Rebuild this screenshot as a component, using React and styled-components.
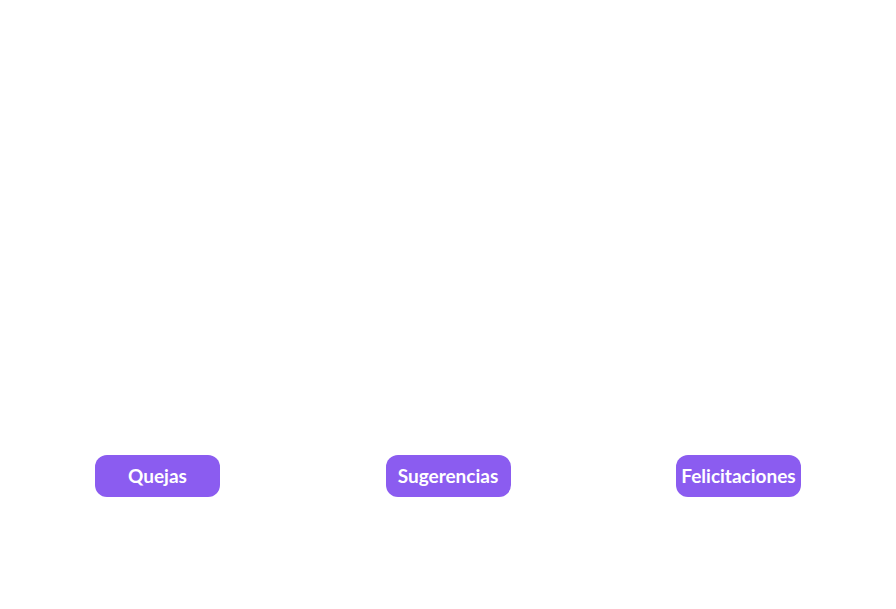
import React from "react";
import styled, { createGlobalStyle } from "styled-components";

const GlobalStyle = createGlobalStyle`
    body {
        margin: 0;
        background: #ffffff;
        font-family: Lato, "Noto Sans", sans-serif;
    }
`;

const Page = styled.main`
    display: flex;
    flex-direction: column;
    min-height: 609px;
`;

const Banner = styled.div`
    height: 455px;
`;

const Options = styled.nav`
    display: grid;
    grid-template-columns: repeat(3, 290.5px);
    justify-content: center;
    justify-items: center;
`;

const Option = styled.button`
    display: flex;
    align-items: center;
    justify-content: center;
    width: 125px;
    height: 42px;
    padding: 0 0 1px;
    border: none;
    border-radius: 12px;
    background-color: #8b5cf0;
    color: #ffffff;
    font-family: Lato, "Noto Sans", sans-serif;
    font-size: 19px;
    font-weight: 700;
    white-space: nowrap;
    cursor: pointer;
`;

const options = ["Quejas", "Sugerencias", "Felicitaciones"];

function App() {
    return (
        <>
            <GlobalStyle />
            <Page>
                <Banner />
                <Options>
                    {options.map((label) => (
                        <Option key={label}>{label}</Option>
                    ))}
                </Options>
            </Page>
        </>
    );
}

export default App;
